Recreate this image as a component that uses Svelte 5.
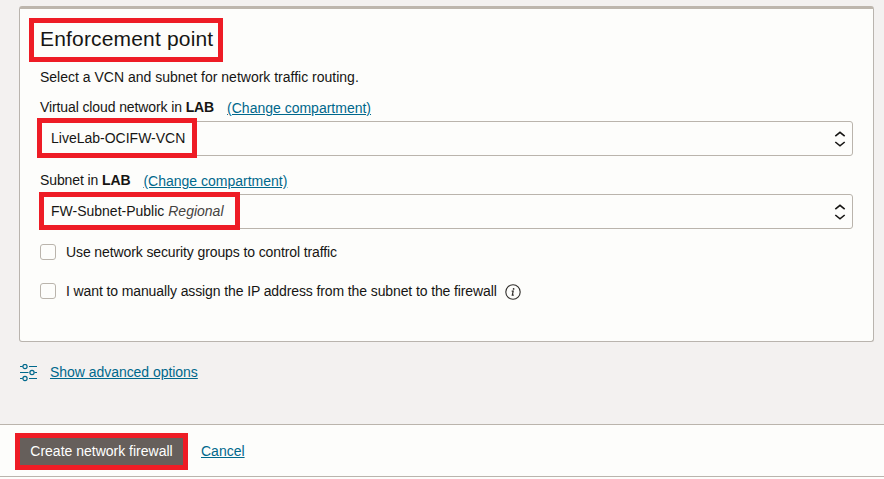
<script>
  const fields = [
    { label: 'Virtual cloud network in', value: 'LiveLab-OCIFW-VCN', note: '', mark: 'vcn' },
    { label: 'Subnet in', value: 'FW-Subnet-Public', note: 'Regional', mark: 'subnet' }
  ];
</script>

<main class="page">
  <section class="card">
    <h2><span class="title">Enforcement point</span><i class="mark heading"></i></h2>
    <p class="intro">Select a VCN and subnet for network traffic routing.</p>
    {#each fields as f}
      <div class="field">
        <div class="label">
          <span class="name">{f.label} <b>LAB</b></span>
          <a href="#compartment" class="change">(Change compartment)</a>
        </div>
        <div class="select">
          <span>{f.value}{#if f.note}&nbsp;<em>{f.note}</em>{/if}</span>
          <svg width="12" height="16" viewBox="0 0 12 16" fill="none" stroke="#161513" stroke-width="1.6">
            <path d="M1.300 5.200 6 1.400l4.700 3.800M1.300 11 6 14.800l4.700-3.800" />
          </svg>
          <i class="mark {f.mark}"></i>
        </div>
      </div>
    {/each}
    <label class="check"><span class="box"></span><span class="name">Use network security groups to control traffic</span></label>
    <label class="check"><span class="box"></span><span class="name">I want to manually assign the IP address from the subnet to the firewall</span>
      <svg class="info" width="16" height="16" viewBox="0 0 16 16" fill="none" stroke="#302e2b">
        <circle cx="8" cy="8" r="7.2" stroke-width="1.1" />
        <circle cx="8.6" cy="4.9" r=".85" fill="#302e2b" stroke="none" />
        <path d="M6.700 7.200h1.500l-.9 3.900h1.500" stroke-width="1.200" />
      </svg>
    </label>
  </section>

  <div class="advanced">
    <svg width="18" height="18" viewBox="0 0 18 18" fill="none" stroke="#00688c" stroke-width="1.2">
      <path d="M0 2.500h2.700M9 2.500h8M0 8.500h8.500M14.500 8.500H17M0 14.500h2.700M9 14.500H17" />
      <circle cx="5" cy="2.500" r="2.100" />
      <circle cx="12" cy="8.500" r="2.100" />
      <circle cx="5" cy="14.500" r="2.100" />
    </svg>
    <a href="#advanced">Show advanced options</a>
  </div>

  <footer>
    <button>Create network firewall<i class="mark create"></i></button>
    <a href="#cancel">Cancel</a>
  </footer>
</main>

<style>
  :global(body) { margin: 0; background: #fdfdfb; }
  .page {
    box-sizing: border-box;
    height: 479px;
    padding-top: 6px;
    overflow: hidden;
    background: #f3f1f0;
    color: #161513;
    font: 14px/20px "Liberation Sans", Arial, sans-serif;
    display: flex;
    flex-direction: column;
  }
  .card {
    box-sizing: border-box;
    height: 336px;
    margin: 0 10px 0 19px;
    padding: 15px 20px 0;
    border: 1px solid #b9b4ae;
    border-top: 3px solid #bdb6ad;
    border-radius: 3px;
    background: #fdfdfb;
  }
  h2 {
    position: relative;
    margin: 0;
    height: 30px;
    font-size: 21px;
    line-height: 30px;
    font-weight: 400;
  }
  .title { letter-spacing: .17px; }
  .name { letter-spacing: -.11px; }
  .intro { margin: 13px 0 10px; }
  .field { margin-bottom: 14px; }
  .label { height: 24px; display: flex; gap: 13px; white-space: nowrap; }
  a { color: #00688c; text-decoration: underline; text-underline-offset: 1px; }
  .change { margin-top: 1px; }
  .select {
    position: relative;
    box-sizing: border-box;
    height: 35px;
    padding: 0 6px 2px 10px;
    border: 1px solid #bab4ac;
    border-radius: 3px;
    display: flex;
    align-items: center;
    justify-content: space-between;
  }
  .select svg { margin-top: 2px; }
  em { color: #45423f; }
  .mark {
    position: absolute;
    box-sizing: border-box;
    border: 5px solid #ee1c25;
    pointer-events: none;
  }
  .heading { left: -11px; top: -6px; width: 194px; height: 44px; }
  .vcn { left: -4px; top: -4px; width: 160px; height: 40px; }
  .subnet { left: -2px; top: -3px; width: 201px; height: 38px; }
  .check { display: flex; align-items: center; height: 20px; margin-bottom: 19px; }
  .field + .check { margin-top: -1px; }
  .box {
    box-sizing: border-box;
    width: 16px;
    height: 16px;
    margin-right: 10px;
    border: 1px solid #bab4ac;
    border-radius: 3px;
  }
  .info { margin: 2px 0 0 8px; }
  .advanced { display: flex; height: 20px; margin: 20px 0 0 20px; gap: 12px; align-items: center; }
  .advanced a { letter-spacing: -.04px; }
  .advanced svg { margin-top: 1px; }
  footer {
    box-sizing: border-box;
    height: 53px;
    margin-top: 42px;
    padding: 0 20px;
    border: solid #bab4ac;
    border-width: 1px 0;
    background: #fdfdfb;
    display: flex;
    align-items: center;
    gap: 18px;
    box-shadow: 0 4px #fdfdfb;
  }
  button {
    position: relative;
    box-sizing: border-box;
    width: 163px;
    height: 27px;
    margin-top: 2px;
    padding: 0 0 2px;
    border: 0;
    background: #665f5b;
    color: #fff;
    font: inherit;
  }
  .create { left: -5px; top: -5px; width: 173px; height: 37px; }
</style>
